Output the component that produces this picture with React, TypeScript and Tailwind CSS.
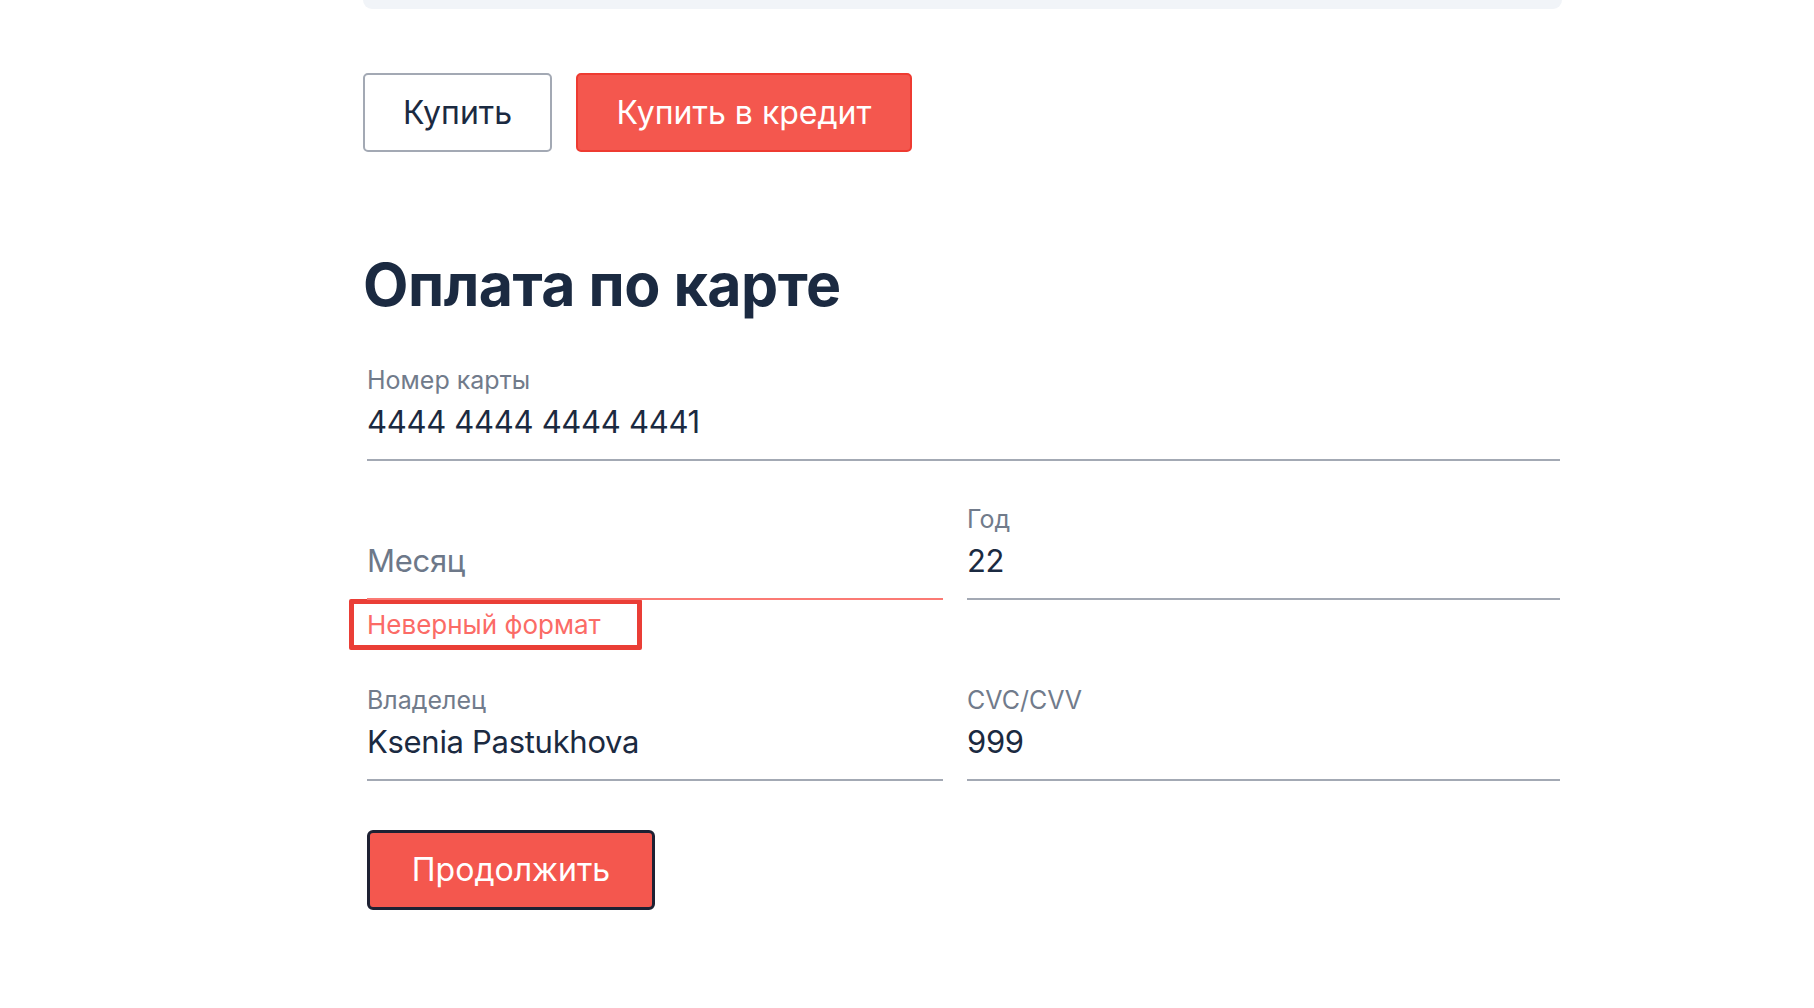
import React from 'react'

const font = { fontFamily: 'Inter, "Noto Sans", sans-serif' }

function Field({ label, value, placeholder, error }: { label?: string; value?: string; placeholder?: string; error?: boolean }) {
  return (
    <div className={`flex flex-col pb-[17px] border-b-2 ${error ? 'border-[#fb7a74]' : 'border-[#a3a9b4]'}`}>
      <div className="h-[30px] text-[25px] leading-[30px] text-[#717b8b]">{label}</div>
      <div className="mt-[7px] h-[40px] text-[31px] leading-[40px] tracking-[-0.3px]">
        {value ? (
          <span className="text-[#1b2a41]">{value}</span>
        ) : (
          <span className="text-[#6d7889]">{placeholder}</span>
        )}
      </div>
    </div>
  )
}

export default function App() {
  return (
    <div className="min-h-screen bg-white" style={font}>
      <div className="pl-[363px] w-[1562px]">
        {/* верхняя плашка */}
        <div className="h-[9px] bg-[#f1f4f8] rounded-b-[14px]" />

        <div className="mt-[64px] flex gap-[24px]">
          <button className="h-[79px] w-[189px] rounded-[5px] border-2 border-[#a3a9b4] bg-white text-[32px] text-[#1b2a41]">
            Купить
          </button>
          <button className="h-[79px] w-[336px] rounded-[5px] border-2 border-[#ee3b31] bg-[#f4574e] text-[32px] text-white">
            Купить в кредит
          </button>
        </div>

        <h1 className="mt-[102px] text-[59px] leading-[62px] font-bold text-[#1b2a41] tracking-[-0.5px]">
          Оплата по карте
        </h1>

        <div className="ml-[4px] mr-[2px]">
          <div className="mt-[49px]">
            <Field label="Номер карты" value="4444 4444 4444 4441" />
          </div>

          <div className="mt-[43px] grid grid-cols-[576px_1fr] gap-[24px]">
            <Field placeholder="Месяц" error />
            <Field label="Год" value="22" />
          </div>

          <div className="-mt-[1px] -ml-[18px] w-[293px] h-[51px] border-[5px] border-[#ea3e36] rounded-[2px] px-[13px] flex items-center">
            <span className="text-[26px] text-[#fb6b66]">Неверный формат</span>
          </div>

          <div className="mt-[35px] grid grid-cols-[576px_1fr] gap-[24px]">
            <Field label="Владелец" value="Ksenia Pastukhova" />
            <Field label="CVC/CVV" value="999" />
          </div>

          <button className="mt-[49px] h-[80px] w-[288px] rounded-[6px] border-[3px] border-[#1e2133] bg-[#f4574e] text-[32px] text-white">
            Продолжить
          </button>
        </div>
      </div>
    </div>
  )
}
